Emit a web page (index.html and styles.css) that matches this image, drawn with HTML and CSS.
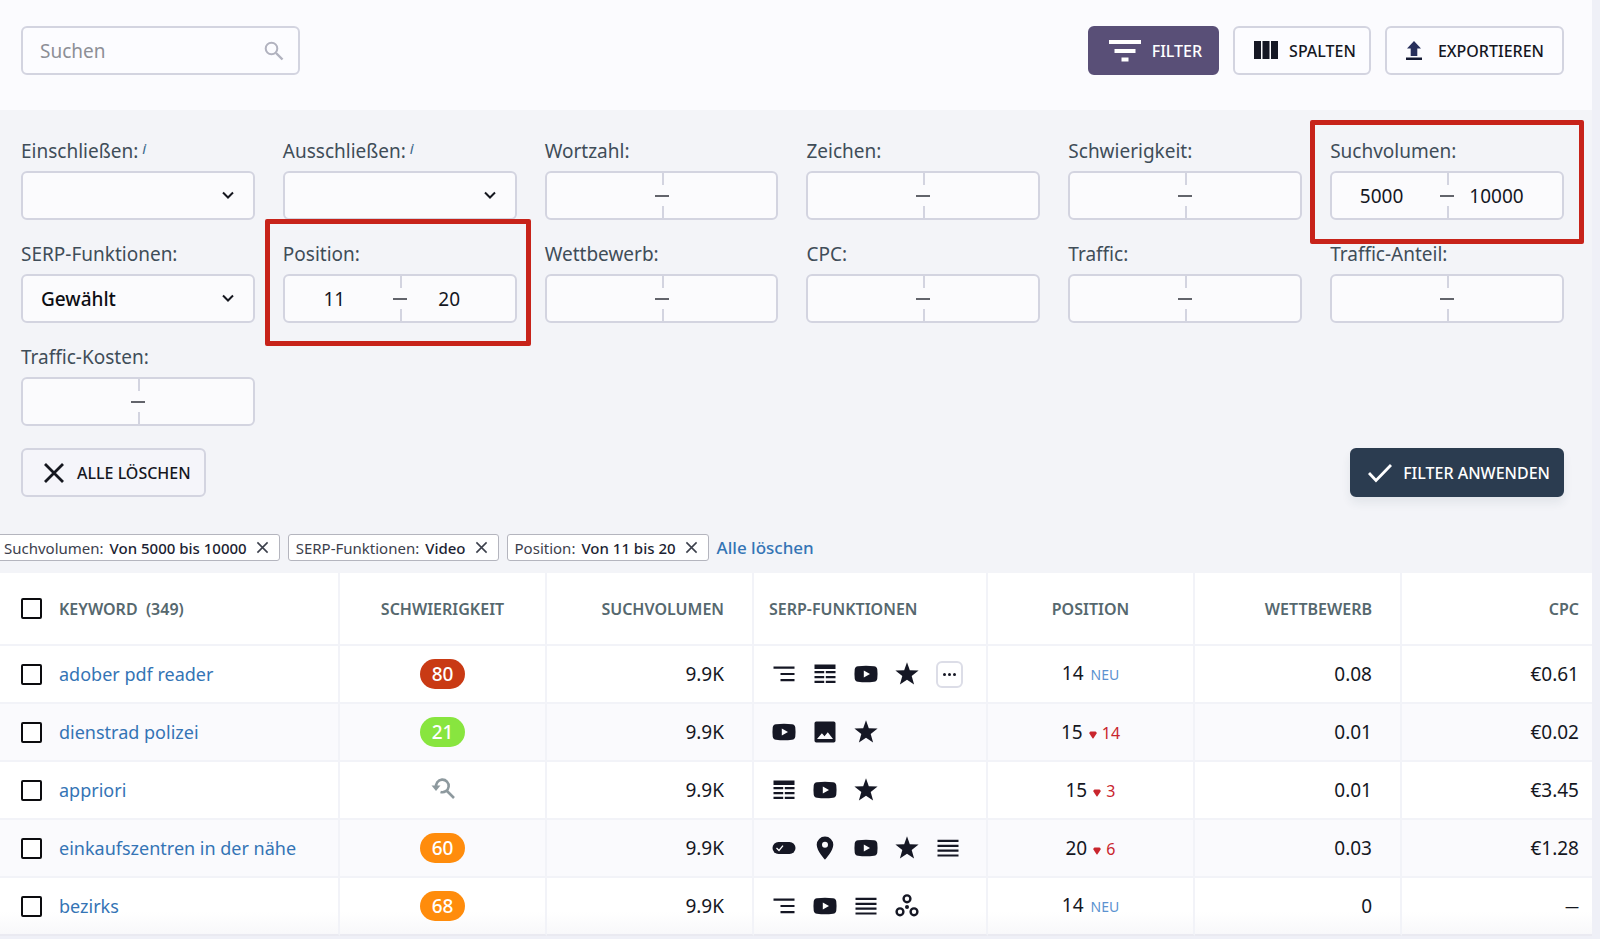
FILE: index.html
```html
<!doctype html>
<html lang="de">

<head>
    <title>Keywords</title>
    <meta charset="UTF-8" />
    <meta name="viewport" content="width=device-width, initial-scale=1" />
    <link rel="stylesheet" href="styles.css">
</head>

<body>
    <svg class="sprite" aria-hidden="true">
        <symbol id="i-chevron" viewBox="0 0 14 14"><path d="M2 4.5l5 5 5-5" fill="none" stroke="currentColor" stroke-width="2" /></symbol>
        <symbol id="i-x" viewBox="0 0 24 24"><path d="M3 3l18 18M21 3L3 21" fill="none" stroke="currentColor" stroke-width="2.8" /></symbol>
        <symbol id="i-close" viewBox="0 0 14 14"><path d="M1.5 1.5l11 11M12.5 1.5l-11 11" fill="none" stroke="currentColor" stroke-width="1.7" /></symbol>
        <symbol id="i-indent" viewBox="0 0 24 24"><path d="M1.5 4.5h21v2.2h-21zM8.5 10.9h14v2.2h-14zM8.5 17h14v2.2h-14z" /></symbol>
        <symbol id="i-table" viewBox="0 0 24 24"><path d="M1.5 2.5h21v4.6h-21zM1.5 9h9.7v2.3H1.5zM12.8 9h9.7v2.3h-9.7zM1.5 13.9h9.7v2.3H1.5zM12.8 13.9h9.7v2.3h-9.7zM1.5 18.7h9.7V21H1.5zM12.8 18.7h9.7V21h-9.7z" /></symbol>
        <symbol id="i-video" viewBox="0 0 24 24"><path fill-rule="evenodd" d="M4 4.2Q12 3.2 20 4.2Q23 4.4 23.3 7.5Q23.8 12 23.3 16.5Q23 19.6 20 19.8Q12 20.8 4 19.800Q1 19.600 .7 16.500Q.2 12 .7 7.500Q1 4.400 4 4.200zM9.800 8.400v7.200L16 12z" /></symbol>
        <symbol id="i-star" viewBox="0 0 24 24"><path d="M12 .3l2.800 8 8.800.3-6.900 5.400 2.400 8.600L12 17.700l-7.100 4.900 2.400-8.600L.4 8.600l8.800-.3z" /></symbol>
        <symbol id="i-image" viewBox="0 0 24 24"><path fill-rule="evenodd" d="M3.300 1.500h17.400q1.800 0 1.800 1.800v17.400q0 1.800-1.800 1.800H3.300q-1.800 0-1.800-1.800V3.300q0-1.800 1.800-1.800zM4 19h16l-5.200-6.800-3.300 4.100-2.600-3.100z" /></symbol>
        <symbol id="i-pill" viewBox="0 0 24 24"><rect x=".5" y="6" width="23" height="12" rx="6" /><path d="M4.500 12l2.500 2.500 4-4.800" fill="none" stroke="#fff" stroke-width="1.3" /></symbol>
        <symbol id="i-pin" viewBox="0 0 24 24"><path fill-rule="evenodd" d="M12 .5a8.300 8.300 0 0 0-8.300 8.300c0 6 8.300 15 8.300 15s8.300-9 8.300-15A8.300 8.300 0 0 0 12 .5zm0 5.300a3 3 0 1 1 0 6 3 3 0 0 1 0-6z" /></symbol>
        <symbol id="i-lines" viewBox="0 0 24 24"><path d="M1.500 3.800h21V6h-21zM1.500 8.800h21V11h-21zM1.500 13.600h21v2.200h-21zM1.500 18.400h21v2.200h-21z" /></symbol>
        <symbol id="i-nodes" viewBox="0 0 24 24"><g fill="none" stroke="currentColor" stroke-width="2.4"><circle cx="12" cy="4.800" r="3.400" /><circle cx="5" cy="17.800" r="3.400" /><circle cx="19" cy="17.800" r="3.400" /></g><circle cx="12" cy="13" r="2" /></symbol>
        <symbol id="i-down" viewBox="0 0 10 8"><path d="M2.500.5h5Q9 .8 8.600 2.600L5.500 7.200q-.5.600-1 0L1.400 2.600Q1 .8 2.500.5z" /></symbol>
    </svg>

    <main class="page">
        <header class="toolbar">
            <div class="search">
                <input type="search" placeholder="Suchen" aria-label="Suchen">
                <svg class="search-icon" viewBox="0 0 20 20"><circle cx="7.500" cy="7.500" r="5.800" fill="none" stroke="currentColor" stroke-width="2" /><path d="M12 12l6.500 6.500" stroke="currentColor" stroke-width="2.400" /></svg>
            </div>
            <div class="actions">
                <button class="btn btn-filter">
                    <svg width="32" height="24" viewBox="0 0 32 24"><path d="M0 1h32v4H0zM5.500 10h21v4h-21zM12.500 18.500h7v4h-7z" fill="currentColor" /></svg>
                    Filter
                </button>
                <button class="btn">
                    <svg width="24" height="20" viewBox="0 0 24 20"><path d="M0 0h7v18H0zM8.500 0h7v18h-7zM17 0h7v18h-7z" fill="#151724" /></svg>
                    Spalten
                </button>
                <button class="btn btn-export">
                    <svg width="16" height="20" viewBox="0 0 16 20"><path d="M8 0l7 7.500h-3.700V15H4.700V7.500H1z" fill="#28305c" /><path d="M0 16.500h16V19H0z" fill="#151a33" /></svg>
                    Exportieren
                </button>
            </div>
        </header>

        <form class="filters" onsubmit="return false">
            <div class="fields">
                <div class="field">
                    <label for="inc">Einschließen:<i>i</i></label>
                    <div class="box select"><select id="inc"><option></option></select><svg><use href="#i-chevron" /></svg></div>
                </div>
                <div class="field">
                    <label for="exc">Ausschließen:<i>i</i></label>
                    <div class="box select"><select id="exc"><option></option></select><svg><use href="#i-chevron" /></svg></div>
                </div>
                <div class="field">
                    <label for="words">Wortzahl:</label>
                    <div class="box range"><input type="text" id="words"><input type="text" aria-label="Wortzahl bis"></div>
                </div>
                <div class="field">
                    <label for="chars">Zeichen:</label>
                    <div class="box range"><input type="text" id="chars"><input type="text" aria-label="Zeichen bis"></div>
                </div>
                <div class="field">
                    <label for="diff">Schwierigkeit:</label>
                    <div class="box range"><input type="text" id="diff"><input type="text" aria-label="Schwierigkeit bis"></div>
                </div>
                <div class="field marked marked-volume">
                    <label for="vol">Suchvolumen:</label>
                    <div class="box range"><input type="text" id="vol" value="5000"><input type="text" value="10000" aria-label="Suchvolumen bis"></div>
                </div>

                <div class="field">
                    <label for="serp">SERP-Funktionen:</label>
                    <div class="box select"><select id="serp"><option>Gewählt</option></select><svg><use href="#i-chevron" /></svg></div>
                </div>
                <div class="field marked marked-position">
                    <label for="pos">Position:</label>
                    <div class="box range"><input type="text" id="pos" value="11"><input type="text" value="20" aria-label="Position bis"></div>
                </div>
                <div class="field">
                    <label for="comp">Wettbewerb:</label>
                    <div class="box range"><input type="text" id="comp"><input type="text" aria-label="Wettbewerb bis"></div>
                </div>
                <div class="field">
                    <label for="cpc">CPC:</label>
                    <div class="box range"><input type="text" id="cpc"><input type="text" aria-label="CPC bis"></div>
                </div>
                <div class="field">
                    <label for="traffic">Traffic:</label>
                    <div class="box range"><input type="text" id="traffic"><input type="text" aria-label="Traffic bis"></div>
                </div>
                <div class="field">
                    <label for="share">Traffic-Anteil:</label>
                    <div class="box range"><input type="text" id="share"><input type="text" aria-label="Traffic-Anteil bis"></div>
                </div>

                <div class="field">
                    <label for="cost">Traffic-Kosten:</label>
                    <div class="box range"><input type="text" id="cost"><input type="text" aria-label="Traffic-Kosten bis"></div>
                </div>
            </div>
            <div class="form-actions">
                <button type="reset" class="btn btn-clear"><svg width="24" height="24"><use href="#i-x" /></svg>Alle löschen</button>
                <button type="submit" class="btn btn-apply"><svg width="24" height="20" viewBox="0 0 24 20"><path d="M1 10l7 7.500L23 2" fill="none" stroke="currentColor" stroke-width="2.800" /></svg>Filter anwenden</button>
            </div>
        </form>

        <div class="chips">
            <span class="chip">Suchvolumen: <b>Von 5000 bis 10000</b><button aria-label="Entfernen"><svg><use href="#i-close" /></svg></button></span>
            <span class="chip">SERP-Funktionen: <b>Video</b><button aria-label="Entfernen"><svg><use href="#i-close" /></svg></button></span>
            <span class="chip">Position: <b>Von 11 bis 20</b><button aria-label="Entfernen"><svg><use href="#i-close" /></svg></button></span>
            <a href="#" class="clear-link">Alle löschen</a>
        </div>

        <table class="keywords">
            <colgroup>
                <col class="c-key"><col class="c-std"><col class="c-std"><col class="c-serp"><col class="c-std"><col class="c-std"><col>
            </colgroup>
            <thead>
                <tr>
                    <th><label class="key"><input type="checkbox">Keyword&nbsp; (349)</label></th>
                    <th class="mid">Schwierigkeit</th>
                    <th class="num">Suchvolumen</th>
                    <th>SERP-Funktionen</th>
                    <th class="mid">Position</th>
                    <th class="num">Wettbewerb</th>
                    <th class="num">CPC</th>
                </tr>
            </thead>
            <tbody>
                <tr>
                    <td><div class="key"><input type="checkbox" aria-label="adober pdf reader"><a href="#">adober pdf reader</a></div></td>
                    <td class="mid"><span class="badge hard">80</span></td>
                    <td class="num">9.9K</td>
                    <td><div class="serp"><svg><use href="#i-indent" /></svg><svg><use href="#i-table" /></svg><svg><use href="#i-video" /></svg><svg><use href="#i-star" /></svg><button class="more" aria-label="Mehr"><i></i><i></i><i></i></button></div></td>
                    <td class="mid">14 <span class="new">NEU</span></td>
                    <td class="num">0.08</td>
                    <td class="num">€0.61</td>
                </tr>
                <tr>
                    <td><div class="key"><input type="checkbox" aria-label="dienstrad polizei"><a href="#">dienstrad polizei</a></div></td>
                    <td class="mid"><span class="badge easy">21</span></td>
                    <td class="num">9.9K</td>
                    <td><div class="serp"><svg><use href="#i-video" /></svg><svg><use href="#i-image" /></svg><svg><use href="#i-star" /></svg></div></td>
                    <td class="mid">15 <span class="drop"><svg><use href="#i-down" /></svg> 14</span></td>
                    <td class="num">0.01</td>
                    <td class="num">€0.02</td>
                </tr>
                <tr>
                    <td><div class="key"><input type="checkbox" aria-label="appriori"><a href="#">appriori</a></div></td>
                    <td class="mid"><svg class="refresh" viewBox="0 0 24 24"><path d="M5.300 9.500A6.300 6.300 0 1 1 9.500 13.900M15.500 12.500l7.500 7.500" fill="none" stroke="currentColor" stroke-width="2.600" /><path d="M.5 7.500h9L5 13z" fill="currentColor" /></svg></td>
                    <td class="num">9.9K</td>
                    <td><div class="serp"><svg><use href="#i-table" /></svg><svg><use href="#i-video" /></svg><svg><use href="#i-star" /></svg></div></td>
                    <td class="mid">15 <span class="drop"><svg><use href="#i-down" /></svg> 3</span></td>
                    <td class="num">0.01</td>
                    <td class="num">€3.45</td>
                </tr>
                <tr>
                    <td><div class="key"><input type="checkbox" aria-label="einkaufszentren in der nähe"><a href="#">einkaufszentren in der nähe</a></div></td>
                    <td class="mid"><span class="badge medium">60</span></td>
                    <td class="num">9.9K</td>
                    <td><div class="serp"><svg><use href="#i-pill" /></svg><svg><use href="#i-pin" /></svg><svg><use href="#i-video" /></svg><svg><use href="#i-star" /></svg><svg><use href="#i-lines" /></svg></div></td>
                    <td class="mid">20 <span class="drop"><svg><use href="#i-down" /></svg> 6</span></td>
                    <td class="num">0.03</td>
                    <td class="num">€1.28</td>
                </tr>
                <tr>
                    <td><div class="key"><input type="checkbox" aria-label="bezirks"><a href="#">bezirks</a></div></td>
                    <td class="mid"><span class="badge medium">68</span></td>
                    <td class="num">9.9K</td>
                    <td><div class="serp"><svg><use href="#i-indent" /></svg><svg><use href="#i-video" /></svg><svg><use href="#i-lines" /></svg><svg><use href="#i-nodes" /></svg></div></td>
                    <td class="mid">14 <span class="new">NEU</span></td>
                    <td class="num">0</td>
                    <td class="num"><span class="none">—</span></td>
                </tr>
            </tbody>
        </table>
    </main>
</body>

</html>
```

FILE: styles.css
```css
* {
    box-sizing: border-box;
}

body {
    margin: 0;
    background: #eff0f7;
    color: #15171f;
    font-family: "Noto Sans", "Open Sans", sans-serif;
    font-size: 18px;
    line-height: 26px;
}

input,
select,
button {
    font: inherit;
    color: inherit;
    margin: 0;
}

button {
    cursor: pointer;
}

a {
    color: #3474b5;
    text-decoration: none;
}

.sprite {
    display: none;
}

.page {
    margin-right: 8px;
    background: #f3f4f8;
    overflow: hidden;
}

/* toolbar */
.toolbar {
    display: flex;
    justify-content: space-between;
    padding: 26px 28px 35px 21px;
    background: #fbfbfe;
}

.search {
    position: relative;
    width: 279px;
}

.search input {
    width: 100%;
    height: 49px;
    padding: 0 48px 0 17px;
    border: 2px solid #d3d4e0;
    border-radius: 6px;
    background: #fcfcff;
    font-size: 19px;
    appearance: none;
    outline: none;
}

.search input::placeholder {
    color: #8d8f96;
    opacity: 1;
}

.search-icon {
    position: absolute;
    right: 16px;
    top: 15px;
    width: 20px;
    height: 20px;
    color: #b1b2bf;
}

.actions {
    display: flex;
    gap: 14px;
}

.btn {
    display: flex;
    align-items: center;
    gap: 11px;
    height: 49px;
    padding: 0 13px 0 19px;
    border: 2px solid #d3d4e0;
    border-radius: 6px;
    background: #fcfcff;
    color: #15171f;
    font-size: 16px;
    font-weight: 500;
    text-transform: uppercase;
    white-space: nowrap;
}

.btn-filter {
    padding-right: 15px;
    background: #594f77;
    border-color: #594f77;
    color: #fff;
}

.btn-export {
    gap: 16px;
    padding-right: 18px;
}

.btn-clear {
    background: #f5f5fa;
}

.btn-apply {
    background: #2b3c50;
    border-color: #2b3c50;
    color: #fff;
    box-shadow: 0 6px 10px rgba(43, 60, 80, .08);
    padding: 0 12px 0 16px;
}

/* filter form */
.filters {
    padding: 28px 28px 37px 21px;
}

.fields {
    display: grid;
    grid-template-columns: repeat(6, 1fr);
    gap: 21px 28px;
}

.field {
    position: relative;
}

.field label {
    display: block;
    height: 26px;
    margin-bottom: 7px;
    color: #3f4d58;
    font-size: 19px;
}

.field label i {
    margin-left: 4px;
    font-size: 15px;
    line-height: 1;
    vertical-align: 4px;
    color: #3c6a8c;
}

.box {
    position: relative;
    display: flex;
    height: 49px;
    border: 2px solid #d3d4e0;
    border-radius: 6px;
    background: #fbfbfd;
    font-size: 19px;
}

.select select {
    flex: 1;
    padding: 0 40px 0 18px;
    border: 0;
    background: none;
    appearance: none;
    color: #0c0d12;
    font-weight: 500;
    outline: none;
}

.select svg {
    position: absolute;
    right: 18px;
    top: 15px;
    width: 14px;
    height: 14px;
    pointer-events: none;
}

.range input {
    width: 50%;
    padding: 0 16px 0 0;
    border: 0;
    background: none;
    text-align: center;
    outline: none;
}

/* divider with a hole in the middle for the dash */
.range::before {
    content: "";
    position: absolute;
    left: 50%;
    top: 0;
    bottom: 0;
    width: 2px;
    background: linear-gradient(#d3d4e0 12px, transparent 12px, transparent 33px, #d3d4e0 33px);
}

.range::after {
    content: "";
    position: absolute;
    left: calc(50% - 7px);
    top: 22px;
    width: 14px;
    height: 2px;
    background: #62646b;
}

.marked::after {
    content: "";
    position: absolute;
    border: 5px solid #c7231a;
    border-radius: 2px;
    pointer-events: none;
    z-index: 1;
}

.marked-volume::after {
    inset: -18px -20px -24px -20px;
}

.marked-position::after {
    inset: -22px -14px -23px -18px;
}

.form-actions {
    display: flex;
    justify-content: space-between;
    margin-top: 22px;
}

/* active filters */
.chips {
    display: flex;
    align-items: center;
    gap: 8px;
    margin: 0 0 12px -4px;
}

.chip {
    display: flex;
    align-items: center;
    height: 27px;
    padding: 0 6px 0 7px;
    border: 1px solid #b4b5be;
    border-radius: 3px;
    background: #fff;
    color: #3c404c;
    font-size: 15px;
    white-space: nowrap;
}

.chip b {
    margin-left: 6px;
    font-weight: 500;
    color: #1d1f33;
}

.chip button {
    display: flex;
    padding: 4px;
    margin-left: 5px;
    border: 0;
    background: none;
}

.chip svg {
    width: 13px;
    height: 13px;
}

.clear-link {
    font-size: 17px;
    font-weight: 500;
}

/* table */
.keywords {
    width: 100%;
    table-layout: fixed;
    border-collapse: separate;
    border-spacing: 0;
    background: #fff;
}

.c-key {
    width: 340px;
}

.c-std {
    width: 207px;
}

.c-serp {
    width: 234px;
}

.keywords th,
.keywords td {
    height: 58px;
    padding: 0 15px;
    border-right: 2px solid #f2f3f8;
    border-bottom: 2px solid #f2f3f8;
    text-align: left;
    white-space: nowrap;
}

.keywords th {
    height: 73px;
    color: #56686e;
    font-size: 16px;
    font-weight: 600;
    text-transform: uppercase;
}

.keywords tbody tr:nth-child(even) td {
    background: #fafafd;
}

.keywords tbody tr:last-child td {
    background: linear-gradient(#fff 60%, #f8f8fa);
    border-bottom-color: #eaeaf1;
}

.keywords .mid {
    text-align: center;
}

.keywords td.mid,
.keywords td.num {
    font-size: 19px;
}

.keywords .num {
    text-align: right;
    padding-right: 28px;
}

.keywords .num:last-child {
    padding-right: 13px;
    border-right: 0;
}

.key {
    display: flex;
    align-items: center;
    gap: 17px;
    padding-left: 6px;
}

.key input {
    width: 21px;
    height: 21px;
    border: 2px solid #0c0c0f;
    border-radius: 2px;
    background: #fff;
    appearance: none;
}

.badge {
    display: inline-block;
    width: 45px;
    height: 30px;
    border-radius: 15px;
    color: #fff;
    font-weight: 500;
    line-height: 30px;
    vertical-align: middle;
}

.hard {
    background: #c93a14;
}

.medium {
    background: #ff8c0c;
}

.easy {
    background: #88e53f;
}

.refresh {
    display: block;
    width: 24px;
    height: 24px;
    margin: 0 auto;
    color: #8d999e;
}

.serp {
    display: flex;
    align-items: center;
    gap: 17px;
    padding-left: 3px;
}

.serp svg {
    width: 24px;
    height: 24px;
    fill: #151724;
    color: #151724;
}

.more {
    display: flex;
    align-items: center;
    justify-content: center;
    gap: 2px;
    width: 27px;
    height: 27px;
    padding: 0;
    border: 2px solid #dcdde7;
    border-radius: 6px;
    background: #fff;
}

.more i {
    width: 3px;
    height: 3px;
    border-radius: 50%;
    background: #151724;
}

.none {
    font-size: 14px;
}

.new {
    margin-left: 2px;
    font-size: 14px;
    color: #5b92d0;
}

.drop {
    font-size: 16px;
    color: #c9252d;
}

.drop svg {
    width: 10px;
    height: 8px;
    fill: currentColor;
}
```
